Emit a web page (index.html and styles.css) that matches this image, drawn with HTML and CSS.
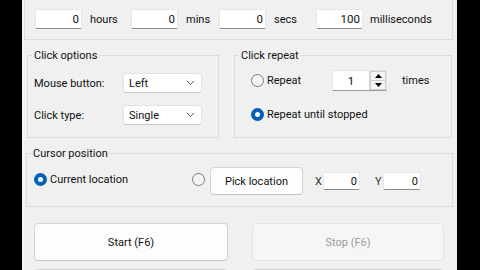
FILE: index.html
```html
<!DOCTYPE html>
<html>
<head>
<meta charset="utf-8">
<link rel="stylesheet" href="styles.css">
</head>
<body>
<div class="win">
  <fieldset class="grp top">
    <div class="trow">
      <span class="tb w47">0</span><span class="unit u1">hours</span>
      <span class="tb w47">0</span><span class="unit u2">mins</span>
      <span class="tb w47">0</span><span class="unit u3">secs</span>
      <span class="tb w47">100</span><span class="unit u4">milliseconds</span>
    </div>
  </fieldset>

  <div class="row2">
    <fieldset class="grp opts">
      <legend>Click options</legend>
      <div class="frow first">
        <span class="flabel">Mouse button:</span>
        <span class="combo"><span>Left</span><svg class="chev" width="9" height="6" viewBox="0 0 9 6"><polyline points="1,1 4.5,4.5 8,1" fill="none" stroke="#606060" stroke-width="1"/></svg></span>
      </div>
      <div class="frow">
        <span class="flabel">Click type:</span>
        <span class="combo"><span>Single</span><svg class="chev" width="9" height="6" viewBox="0 0 9 6"><polyline points="1,1 4.5,4.5 8,1" fill="none" stroke="#606060" stroke-width="1"/></svg></span>
      </div>
    </fieldset>

    <fieldset class="grp rep">
      <legend>Click repeat</legend>
      <div class="rrow first">
        <span class="radio"></span><span class="rlabel">Repeat</span>
        <span class="spin">
          <span class="spinval">1</span>
          <span class="spinbtns">
            <span class="sb"><svg width="7" height="4" viewBox="0 0 7 4"><polygon points="0,4 3.5,0 7,4" fill="#000"/></svg></span>
            <span class="sb"><svg width="7" height="4" viewBox="0 0 7 4"><polygon points="0,0 3.5,4 7,0" fill="#000"/></svg></span>
          </span>
        </span>
        <span class="times">times</span>
      </div>
      <div class="rrow second">
        <span class="radio on"></span><span class="rtext">Repeat until stopped</span>
      </div>
    </fieldset>
  </div>

  <fieldset class="grp cur">
    <legend>Cursor position</legend>
    <div class="crow">
      <span class="radio on up"></span><span class="clabel up">Current location</span>
      <span class="radio up"></span>
      <span class="btn pick">Pick location</span>
      <span class="xy">X</span><span class="tb small w37">0</span>
      <span class="xy y">Y</span><span class="tb small w38">0</span>
    </div>
  </fieldset>

  <div class="brow">
    <span class="btn big start">Start (F6)</span>
    <span class="btn big stop">Stop (F6)</span>
  </div>
  <div class="brow next">
    <span class="btn big start"></span>
    <span class="btn big start2"></span>
  </div>
</div>
</body>
</html>
```

FILE: styles.css
```css
* { box-sizing: border-box; }
html, body { margin: 0; padding: 0; }
body {
  background: #000;
  font-family: "Segoe UI", Roboto, "Noto Sans", sans-serif;
  font-size: 11px;
  color: #111;
  width: 480px;
  height: 270px;
  overflow: hidden;
}
.win {
  margin-left: 22px;
  width: 435px;
  height: 270px;
  background: #f0f0f0;
  overflow: hidden;
  border-left: 2px solid #f7f7f7;
}
.grp {
  margin: 0;
  padding: 0;
  border: 1px solid #dcdcdc;
  min-width: 0;
}
legend {
  padding: 0 2px;
  margin-left: 4px;
  line-height: 13px;
  height: 13px;
}
.top {
  width: 429px;
  border-top: none;
  padding: 9px 0 10px 10px;
}
.trow { display: flex; align-items: center; height: 20px; }
.tb {
  display: flex;
  align-items: center;
  justify-content: flex-end;
  background: #fff;
  border: 1px solid #e6e6e6;
  border-bottom: 1px solid #8c8c8c;
  border-radius: 2px;
  height: 20px;
  padding-right: 2px;
  font-size: 11.5px;
}
.w47 { width: 47px; }
.unit { margin-left: 8px; }
.u1 { width: 41px; }
.u2 { width: 33px; }
.u3 { width: 42px; }
.u4 { margin-left: 7px; }

.row2 { display: flex; margin-top: 9px; }
.opts { margin-left: 3px; width: 192px; height: 89px; }
.rep { margin-left: 15px; width: 218px; height: 89px; }

.frow { display: flex; align-items: center; height: 20px; padding-left: 6px; margin-top: 12px; }
.frow.first { margin-top: 11px; }
.flabel { width: 89px; }
.combo {
  display: flex;
  align-items: center;
  justify-content: space-between;
  width: 79px;
  height: 20px;
  background: #fff;
  border: 1px solid #e3e3e3;
  border-bottom-color: #c8c8c8;
  border-radius: 3px;
  padding: 0 6px 0 5px;
}

.rrow { display: flex; align-items: center; padding-left: 16px; }
.rrow.first { margin-top: 8px; height: 21px; }
.rrow.second { margin-top: 13px; height: 20px; }
.radio {
  display: inline-block;
  width: 13px;
  height: 13px;
  border-radius: 50%;
  border: 1px solid #7a7a7a;
  background: #f5f5f5;
  flex: none;
}
.radio.on {
  border: 4px solid #005fb8;
  background: #fff;
}
.rlabel { margin-left: 3px; width: 65px; }
.rtext { margin-left: 3px; }
.spin {
  display: flex;
  width: 55px;
  height: 21px;
  background: #fff;
  border: 1px solid #e3e3e3;
  border-bottom-color: #9a9a9a;
}
.spinval { flex: 1; display: flex; align-items: center; justify-content: center; font-size: 11.5px; }
.spinbtns { width: 17px; display: flex; flex-direction: column; border-left: 1px solid #d6d6d6; }
.sb { flex: 1; display: flex; align-items: center; justify-content: center; background: #f4f4f4; border: 1px solid #cfcfcf; }
.sb + .sb { border-top: none; }
.times { margin-left: 15px; }

.cur { margin-left: 2px; margin-top: 9px; width: 427px; height: 60px; }
.crow { display: flex; align-items: center; height: 28px; margin-top: 7px; padding-left: 7px; }
.up { margin-bottom: 3px; }
.clabel { margin-left: 3px; width: 142px; }
.btn {
  display: flex;
  align-items: center;
  justify-content: center;
  background: #fdfdfd;
  border: 1px solid #d4d4d4;
  border-bottom-color: #c4c4c4;
  border-radius: 4px;
}
.pick { margin-left: 5px; width: 93px; height: 28px; }
.xy { margin-left: 12px; width: 8px; color: #333; }
.xy.y { margin-left: 15px; }
.tb.small { height: 18px; font-size: 11px; }
.w37 { width: 37px; }
.w38 { width: 38px; }

.brow { display: flex; margin-top: 16px; }
.brow.next { margin-top: 8px; }
.big { height: 38px; }
.start { margin-left: 10px; width: 194px; }
.stop { margin-left: 24px; width: 192px; background: #f6f6f6; border-color: #e4e4e4; color: #9c9c9c; }
.start2 { margin-left: 24px; width: 192px; }
```
